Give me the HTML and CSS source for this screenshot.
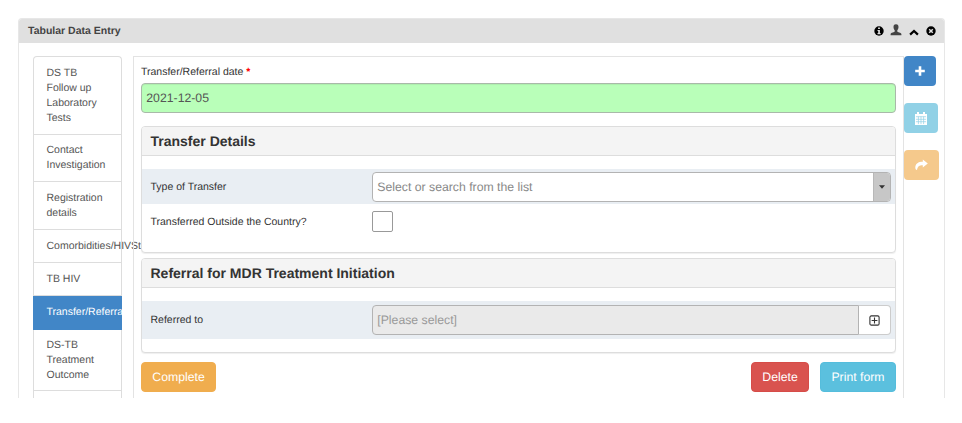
FILE: index.html
```html
<!DOCTYPE html>
<html lang="en">
<head>
<meta charset="utf-8">
<title>Tabular Data Entry</title>
<link rel="stylesheet" href="styles.css">
</head>
<body>
<section class="panel">
  <header class="panel-head">
    <h1>Tabular Data Entry</h1>
    <div class="tools">
      <svg class="i-info" width="10" height="10" viewBox="0 0 10 10"><circle cx="5" cy="5" r="4.7" fill="#000"/><path d="M4.1 1.5h1.8v1.400H4.100zM3.500 4h2.400v3.100h.7v1.100H3.500V7.100h.7V5h-.7z" fill="#e0e0e0"/></svg>
      <svg class="i-user" width="12" height="12" viewBox="0 0 12 12"><path d="M6 .2c1.900 0 2.600 1.300 2.500 3-.1 1.500-.6 2.300-1.200 3v1.300c.1.600 3.800 1.100 4.100 2.500v1.300H.6V10c.3-1.400 4-1.900 4.100-2.500V6.200c-.6-.7-1.100-1.500-1.200-3C3.400 1.500 4.100.2 6 .2z" fill="#444"/></svg>
      <svg class="i-up" width="10" height="7" viewBox="0 0 10 7"><path d="M1.100 5.600 5 1.900l3.900 3.700" fill="none" stroke="#000" stroke-width="2.200"/></svg>
      <svg class="i-close" width="10" height="10" viewBox="0 0 10 10"><circle cx="5" cy="5" r="4.700" fill="#000"/><path d="m3.200 3.200 3.600 3.600m0-3.600L3.200 6.800" stroke="#e0e0e0" stroke-width="1.500"/></svg>
    </div>
  </header>
  <div class="panel-body">
    <nav class="stages">
      <a class="four">DS TB<br>Follow up<br>Laboratory<br>Tests</a>
      <a class="two">Contact<br>Investigation</a>
      <a class="two last-two">Registration<br>details</a>
      <a class="one">Comorbidities/HIVSt</a>
      <a class="one">TB HIV</a>
      <a class="one active">Transfer/Referral</a>
      <a class="three">DS-TB<br>Treatment<br>Outcome</a>
      <a class="more"></a>
    </nav>
    <main class="entry">
      <label class="date-label">Transfer/Referral date <b>*</b></label>
      <div class="control date">2021-12-05</div>
      <section class="group transfer">
        <h2>Transfer Details</h2>
        <div class="row shaded">
          <span class="name">Type of Transfer</span>
          <div class="control select"><span>Select or search from the list</span><i class="toggle"><svg width="6" height="4" viewBox="0 0 6 4"><path d="M0 .3h6L3 3.700z" fill="#333"/></svg></i></div>
        </div>
        <div class="row">
          <span class="name">Transferred Outside the Country?</span>
          <span class="check"></span>
        </div>
      </section>
      <section class="group referral">
        <h2>Referral for MDR Treatment Initiation</h2>
        <div class="row shaded tall">
          <span class="name">Referred to</span>
          <div class="control picker"><span>[Please select]</span></div>
          <div class="addon"><svg width="11" height="11" viewBox="0 0 11 11"><rect x=".9" y=".9" width="9.200" height="9.200" rx="1.400" fill="none" stroke="#333" stroke-width="1.100"/><path d="M5.500 2.600v5.800M2.600 5.500h5.800" stroke="#333" stroke-width="1.100"/></svg></div>
        </div>
      </section>
      <div class="actions">
        <button class="btn complete">Complete</button>
        <button class="btn delete">Delete</button>
        <button class="btn print">Print form</button>
      </div>
    </main>
    <aside class="side">
      <button class="tile add"><svg width="10" height="10" viewBox="0 0 10 10"><path d="M5 .3v9.400M.2 5h9.600" stroke="#fff" stroke-width="2.600"/></svg></button>
      <button class="tile schedule"><svg width="12" height="13" viewBox="0 0 12 13"><path d="M0 2h12v11H0z" fill="#fff"/><path d="M3 0v3M9 0v3" stroke="#fff" stroke-width="2"/><path d="M.9 4.700h10.200M.9 7.300h10.200M.9 9.700h10.200M3.400 4.500v7.600M6 4.500v7.600M8.600 4.500v7.600" stroke="#91d1e6" stroke-width=".7"/></svg></button>
      <button class="tile refer"><svg width="13" height="12" viewBox="0 0 13 12"><path d="M7.800.4 12.800 4.500 7.800 8.600V6.300C4.600 6.200 2.700 7.200 2 11 .9 10.700.3 10 .3 8.500.3 4.500 3.600 2.600 7.800 2.700z" fill="#fff"/></svg></button>
    </aside>
  </div>
</section>
</body>
</html>
```
FILE: styles.css
```css
* { box-sizing: border-box; }
body {
  margin: 0;
  padding: 18px 17px 0 18px;
  height: 423px;
  overflow: hidden;
  background: #fff;
  color: #333;
  font: 10.5px/14.7px "Liberation Sans", Arial, sans-serif;
  text-rendering: geometricPrecision;
}
h1, h2 { margin: 0; }
svg { display: block; flex: none; }
.panel {
  height: 380px;
  overflow: hidden;
  border: solid #e7e7e7;
  border-width: 1px 1.500px 0;
  border-radius: 4px 4px 0 0;
}
.panel-head {
  height: 24px;
  padding: 0 8px 0 9px;
  display: flex;
  align-items: center;
  justify-content: space-between;
  background: #e0e0e0;
}
.panel-head h1 { font-size: 10.5px; line-height: 14px; color: #444; }
.tools { display: flex; align-items: center; }
.i-info { margin-right: .5px; }
.i-user { margin: -2px 7px 0 5.5px; }
.i-up { margin: 2px 7px 0 0; }
.panel-body { display: flex; height: 355px; padding: 13px 0 0 14px; }
.stages {
  width: 89px;
  height: 342px;
  flex: none;
  border: 1px solid #ddd;
  border-bottom: 0;
  border-radius: 4px 4px 0 0;
}
.stages a {
  display: block;
  padding: 9.4px 0 0 12.500px;
  border-bottom: 1px solid #ddd;
  color: #555;
  white-space: nowrap;
}
.stages .four { height: 78px; }
.stages .two { height: 47px; padding-top: 8.4px; }
.stages .last-two { height: 48px; padding-top: 9.4px; }
.stages .one { height: 33px; }
.stages .active { height: 34px; margin: 0 -1px; padding-left: 13.500px; background: #4186c7; border-color: #4186c7; color: #fff; }
.stages .three { height: 61px; padding-top: 8.4px; }
.stages .more { border: 0; }
.entry {
  width: 771px;
  height: 342px;
  flex: none;
  margin-left: 11px;
  padding: 7px 7px 0;
  border: 1px solid #e3e3e3;
  border-bottom: 0;
  position: relative;
}
.date-label { display: block; height: 19px; padding-top: .5px; }
.date-label b { color: #f00; }
.control {
  height: 30px;
  padding: 0 4.3px;
  display: flex;
  align-items: center;
  border: 1px solid #b3b3b3;
  border-radius: 4px;
  font-size: 12.25px;
}
.date { background: #b9ffb9; color: #555; box-shadow: inset 0 1px 1px #0001; border-color: #a9b9a9; }
.group {
  background: #fff;
  border: 1px solid #ddd;
  border-radius: 4px;
  box-shadow: 0 1px 1px #0001;
}
.transfer { height: 127px; margin-top: 13px; }
.referral { height: 95px; margin-top: 5px; }
.group h2 {
  height: 29px;
  margin-bottom: 13px;
  padding-left: 8.5px;
  border-bottom: 1px solid #ddd;
  border-radius: 3px 3px 0 0;
  background: #f4f4f4;
  font-size: 14px;
  line-height: 28px;
}
.row { display: flex; align-items: center; height: 35px; padding: 0 4px 0 8.5px; }
.shaded { background: #e9eef3; }
.tall { height: 38px; }
.name { width: 221.5px; flex: none; padding-top: 1px; }
.select { flex: 1; padding-right: 0; background: #fff; color: #888; overflow: hidden; }
.select span { padding-top: 1px; }
.toggle { width: 17px; height: 30px; margin-left: auto; display: flex; align-items: center; justify-content: center; background: #c7c7c7; border-left: 1px solid #b8b8b8; }
.check { width: 21px; height: 21px; border: 1px solid #999; border-radius: 2px; background: #fff; }
.picker { flex: 1; background: #eaeaea; color: #999; border-radius: 4px 0 0 4px; }
.addon { width: 32px; height: 30px; display: flex; align-items: center; justify-content: center; background: #fff; border: 1px solid #ccc; border-left: 0; border-radius: 0 4px 4px 0; }
.actions { display: flex; margin-top: 9px; }
.btn { height: 30px; padding: 0; border: 1px solid; border-radius: 4px; color: #fff; font: 12.25px "Liberation Sans", Arial, sans-serif; text-rendering: geometricPrecision; }
.complete { width: 75px; background: #f0ad4e; border-color: #f0ad4e; }
.delete { width: 58px; margin-left: auto; background: #d9534f; border-color: #d64c48; }
.print { width: 76px; margin-left: 11px; background: #5bc0de; border-color: #55bddc; }
.side { position: relative; margin-left: -.5px; }
.tile { display: flex; align-items: center; justify-content: center; height: 30px; padding: 0; margin-bottom: 17px; border: 0; border-radius: 4px; }
.add { width: 32px; background: #4186c7; }
.schedule { width: 34px; background: #91d1e6; }
.refer { width: 35px; background: #f5c98c; }
```
